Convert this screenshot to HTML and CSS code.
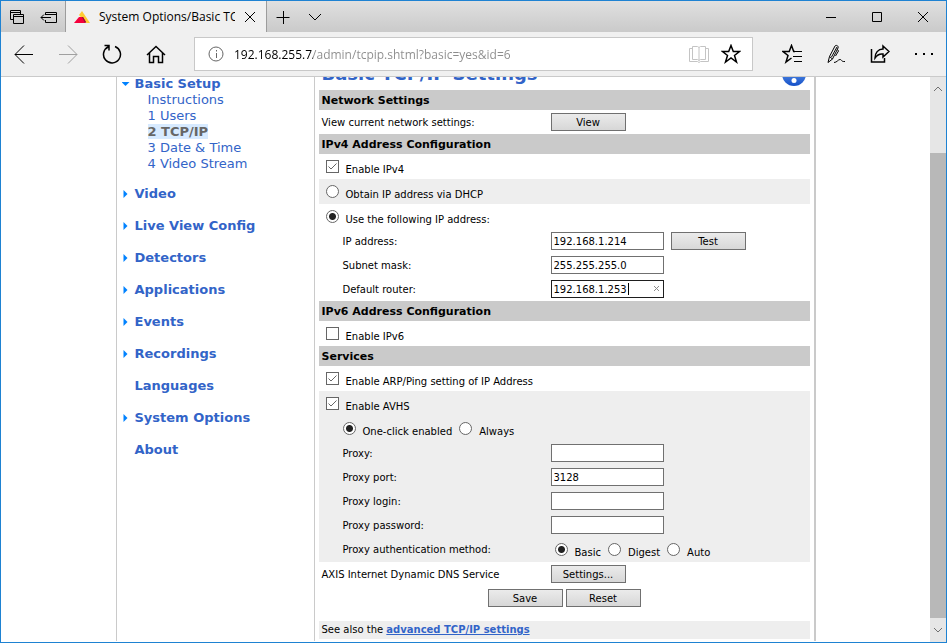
FILE: index.html
```
<!DOCTYPE html>
<html lang="en">

<head>
    <meta charset="utf-8" />
    <meta name="viewport" content="width=device-width, initial-scale=1" />
    <title>System Options/Basic TCP/IP Settings</title>
    <link rel="stylesheet" href="styles.css">
</head>

<body>
    <header class="titlebar">
        <div class="tab-tools">
            <button type="button" aria-label="Tabs set aside">
                <svg width="16" height="16" viewBox="0 0 16 16"><path d="M4 10.500H1.500v-9h10V5M1.500 3.500h10M4.500 5.500h10v9h-10zM4.500 7.500h10" /></svg>
            </button>
            <button type="button" aria-label="Set tabs aside">
                <svg width="18" height="16" viewBox="0 0 18 16"><path d="M5.500 6V3.500h11v10h-11V11M5.500 5.500h11M1 8.500h10M4 5.500l-3 3 3 3" /></svg>
            </button>
        </div>
        <div class="tab">
            <svg width="16" height="12" viewBox="0 0 16 12"><path class="fav-yellow" d="M8 0l8 12h-4L5 4z" /><path class="fav-red" d="M5 6h4l3 5-1 1H0z" /><path class="fav-dark" d="M8 6h1l3 5-1 1z" /></svg>
            <span class="tab-title">System Options/Basic TCP/IP</span>
            <button type="button" aria-label="Close tab">
                <svg width="12" height="12" viewBox="0 0 12 12"><path d="M1 1l10 10M11 1L1 11" /></svg>
            </button>
        </div>
        <button type="button" class="tab-btn" aria-label="New tab">
            <svg width="14" height="14" viewBox="0 0 14 14"><path d="M.5 7.500h13M7.500 1v13" /></svg>
        </button>
        <button type="button" class="tab-btn" aria-label="Tab previews">
            <svg width="14" height="14" viewBox="0 0 14 14"><path d="M1 4l6 6 6-6" /></svg>
        </button>
        <div class="window-btns">
            <button type="button" aria-label="Minimize"><svg width="12" height="12" viewBox="0 0 12 12"><path d="M1 6.500h10" /></svg></button>
            <button type="button" aria-label="Maximize"><svg width="12" height="12" viewBox="0 0 12 12"><path d="M1.500 1.500h9v9h-9z" /></svg></button>
            <button type="button" aria-label="Close"><svg width="12" height="12" viewBox="0 0 12 12"><path d="M1 1l10 10M11 1L1 11" /></svg></button>
        </div>
    </header>

    <nav class="toolbar">
        <button type="button" aria-label="Back"><svg width="20" height="20" viewBox="0 0 20 20"><path d="M19 10.500H1M10 1.500l-9 9 9 9" /></svg></button>
        <button type="button" class="off" aria-label="Forward"><svg width="20" height="20" viewBox="0 0 20 20"><path d="M1 10.500h18M10 1.500l9 9-9 9" /></svg></button>
        <button type="button" aria-label="Refresh"><svg width="20" height="20" viewBox="0 0 20 20"><path class="thick" d="M13 2.500a8.500 8.500 0 1 1-6.500.2M2.500 1.500h4.500v5" /></svg></button>
        <button type="button" aria-label="Home"><svg width="20" height="20" viewBox="0 0 20 20"><path class="thick" d="M1 11l9-8.500 9 8.500M3.500 9v9.500h4v-6h5v6h4V9" /></svg></button>
        <div class="address">
            <svg width="16" height="16" viewBox="0 0 16 16" class="info"><circle cx="8" cy="8" r="7" /><path d="M8.500 7v5M8.500 4v1.500" /></svg>
            <input type="text" class="url" aria-label="Address" value="192.168.255.7/admin/tcpip.shtml?basic=yes&amp;id=6">
            <button type="button" class="faded" aria-label="Reading view"><svg width="20" height="20" viewBox="0 0 20 20"><path d="M10 3.500L8.500 2.500H3.500v13h5l1.500 1 1.500-1h5v-13h-5zM10 3.500v13M3.500 4.500h-3v13h8l1.500 1 1.500-1h8v-13h-3" /></svg></button>
            <button type="button" aria-label="Add to favorites"><svg width="20" height="20" viewBox="0 0 20 20"><path class="thick" d="M10 1.500l2.300 6h6.200l-5 4 2 6.500L10 14l-5.500 4 2-6.500-5-4h6.200z" /></svg></button>
        </div>
        <button type="button" aria-label="Hub"><svg width="20" height="20" viewBox="0 0 20 20"><path class="thick" d="M13 7.500h-1.300l-2.200-6-2.300 6H1l5 4-2 6.500 5.500-4" /><path d="M12 7.500h8M11 12.500h9M12 17.500h8" /></svg></button>
        <button type="button" aria-label="Make a web note"><svg width="20" height="20" viewBox="0 0 20 20"><path d="M2 18.500l1.500-6L9 2c1-1.500 4 0 3 2L6.500 15zM3.500 12.500l3 2.500M5.500 13L11 3M11.500 5.500l1 1.500-3 5M8 18.500c3 0 4-3 6-3s1 2.500 5 2" /></svg></button>
        <button type="button" aria-label="Share"><svg width="20" height="20" viewBox="0 0 20 20"><path class="thick" d="M1.500 5v13h13v-4M13 2l6 5.500-6 5.500v-3C9 9.500 7 11 5 14c0-5 3-9 8-9z" /></svg></button>
        <button type="button" aria-label="More"><svg width="20" height="20" viewBox="0 0 20 20"><path class="dots" d="M1 9h2v2H1zM9 9h2v2H9zM17 9h2v2h-2z" /></svg></button>
    </nav>

    <div class="viewport">
        <div class="scroll-area">
            <div class="page">
                <aside class="menu">
                    <div class="group open">
                        <a href="#" class="top down">Basic Setup</a>
                        <ul>
                            <li><a href="#">Instructions</a></li>
                            <li><a href="#">1 Users</a></li>
                            <li><a href="#" class="current">2 TCP/IP</a></li>
                            <li><a href="#">3 Date &amp; Time</a></li>
                            <li><a href="#">4 Video Stream</a></li>
                        </ul>
                    </div>
                    <a href="#" class="top right">Video</a>
                    <a href="#" class="top right">Live View Config</a>
                    <a href="#" class="top right">Detectors</a>
                    <a href="#" class="top right">Applications</a>
                    <a href="#" class="top right">Events</a>
                    <a href="#" class="top right">Recordings</a>
                    <a href="#" class="top">Languages</a>
                    <a href="#" class="top right">System Options</a>
                    <a href="#" class="top">About</a>
                </aside>

                <main class="main">
                    <div class="heading">
                        <h1>Basic TCP/IP Settings</h1>
                        <a href="#" aria-label="Help"><svg width="24" height="24" viewBox="0 0 24 24"><defs><linearGradient id="ball" x1="0" y1="0" x2="0" y2="1"><stop offset="0" stop-color="#7db1f5" /><stop offset="1" stop-color="#1450c8" /></linearGradient></defs><circle class="ball" cx="12" cy="12" r="12" fill="url(#ball)" /><path class="mark" d="M8 9c0-5 8-5 8-1 0 3-4 3-4 6" /><circle class="dot" cx="12" cy="18.500" r="2.500" /></svg></a>
                    </div>

                    <form>
                        <h2>Network Settings</h2>
                        <div class="row">
                            <span class="name">View current network settings:</span>
                            <button type="button" class="btn">View</button>
                        </div>

                        <h2>IPv4 Address Configuration</h2>
                        <div class="row pick">
                            <input type="checkbox" id="ipv4" checked><label for="ipv4">Enable IPv4</label>
                        </div>
                        <div class="row pick shade">
                            <input type="radio" name="mode" id="dhcp"><label for="dhcp">Obtain IP address via DHCP</label>
                        </div>
                        <div class="row pick">
                            <input type="radio" name="mode" id="static" checked><label for="static">Use the following IP address:</label>
                        </div>
                        <div class="row sub">
                            <label class="name" for="ip">IP address:</label>
                            <input type="text" class="field" id="ip" value="192.168.1.214">
                            <button type="button" class="btn">Test</button>
                        </div>
                        <div class="row sub">
                            <label class="name" for="mask">Subnet mask:</label>
                            <input type="text" class="field" id="mask" value="255.255.255.0">
                        </div>
                        <div class="row sub">
                            <label class="name" for="router">Default router:</label>
                            <div class="clearable">
                                <input type="text" class="field active" id="router" value="192.168.1.253">
                                <span class="caret"></span>
                                <button type="button" class="clear" aria-label="Clear"><svg width="5" height="5" viewBox="0 0 5 5"><path d="M0 0l5 5M5 0L0 5" /></svg></button>
                            </div>
                        </div>

                        <h2>IPv6 Address Configuration</h2>
                        <div class="row pick">
                            <input type="checkbox" id="ipv6"><label for="ipv6">Enable IPv6</label>
                        </div>

                        <h2>Services</h2>
                        <div class="row pick">
                            <input type="checkbox" id="arp" checked><label for="arp">Enable ARP/Ping setting of IP Address</label>
                        </div>
                        <div class="shade">
                            <div class="row pick">
                                <input type="checkbox" id="avhs" checked><label for="avhs">Enable AVHS</label>
                            </div>
                            <div class="row pick sub">
                                <input type="radio" name="avhs-mode" id="oneclick" checked><label for="oneclick">One-click enabled</label>
                                <input type="radio" name="avhs-mode" id="always"><label for="always">Always</label>
                            </div>
                            <div class="row sub">
                                <label class="name" for="proxy">Proxy:</label>
                                <input type="text" class="field" id="proxy">
                            </div>
                            <div class="row sub">
                                <label class="name" for="port">Proxy port:</label>
                                <input type="text" class="field" id="port" value="3128">
                            </div>
                            <div class="row sub">
                                <label class="name" for="login">Proxy login:</label>
                                <input type="text" class="field" id="login">
                            </div>
                            <div class="row sub">
                                <label class="name" for="password">Proxy password:</label>
                                <input type="password" class="field" id="password">
                            </div>
                            <div class="row sub auth">
                                <span class="name">Proxy authentication method:</span>
                                <div class="pick">
                                    <input type="radio" name="auth" id="basic" checked><label for="basic">Basic</label>
                                    <input type="radio" name="auth" id="digest"><label for="digest">Digest</label>
                                    <input type="radio" name="auth" id="auto"><label for="auto">Auto</label>
                                </div>
                            </div>
                        </div>
                        <div class="row">
                            <span class="name">AXIS Internet Dynamic DNS Service</span>
                            <button type="button" class="btn">Settings...</button>
                        </div>
                        <div class="row actions">
                            <button type="submit" class="btn">Save</button>
                            <button type="reset" class="btn">Reset</button>
                        </div>
                    </form>
                    <p class="see-also shade">See also the <a href="#">advanced TCP/IP settings</a></p>
                </main>
            </div>
        </div>
        <div class="scrollbar">
            <svg width="16" height="16" viewBox="0 0 16 16"><path d="M4 10l4-4 4 4" /></svg>
            <div class="track"><div class="thumb"></div></div>
            <svg width="16" height="16" viewBox="0 0 16 16"><path d="M4 6l4 4 4-4" /></svg>
        </div>
    </div>
</body>

</html>
```

FILE: styles.css
```
* {
    box-sizing: border-box;
}

body {
    margin: 0;
    height: 100vh;
    display: flex;
    flex-direction: column;
    overflow: hidden;
    border: 1px solid #1e82d2;
    background-color: #fff;
    font-family: "DejaVu Sans", sans-serif;
    font-size: 10px;
    color: #000;
}

button,
input {
    font: inherit;
    color: inherit;
    margin: 0;
    padding: 0;
}

svg {
    display: block;
    flex: none;
    fill: none;
    stroke: #000;
}

/* title bar */

.titlebar {
    display: flex;
    flex: none;
    height: 31px;
    background: linear-gradient(#e0e0e0, #cacaca);
}

.titlebar button,
.toolbar button {
    display: flex;
    align-items: center;
    justify-content: center;
    flex: none;
    border: none;
    background: none;
}

.tab-tools {
    display: flex;
    width: 65px;
    border-right: 1px solid #9c9c9c;
}

.tab-tools button {
    width: 32px;
}

.tab {
    display: flex;
    align-items: center;
    width: 201px;
    padding: 0 10px 0 8px;
    gap: 9px;
    border-right: 1px solid #9c9c9c;
    background-color: #f0f0f0;
}

.fav-yellow {
    fill: #ffcc33;
    stroke: none;
}

.fav-red {
    fill: #f5003c;
    stroke: none;
}

.fav-dark {
    fill: #8c1432;
    stroke: none;
}

.tab-title {
    flex: 1;
    overflow: hidden;
    white-space: nowrap;
    font-family: "Open Sans", sans-serif;
    font-size: 12px;
}

.tab-btn {
    width: 32px;
}

.window-btns {
    display: flex;
    margin-left: auto;
}

.window-btns button {
    width: 46px;
}

/* address row */

.toolbar {
    display: flex;
    align-items: center;
    flex: none;
    height: 45px;
    padding-left: 1px;
    border-bottom: 1px solid #cacaca;
    background-color: #f0f0f0;
}

.toolbar button {
    width: 44px;
    height: 40px;
}

.toolbar .off svg {
    stroke: #a0a0a0;
}

.thick {
    stroke-width: 1.5;
}

.dots {
    fill: #000;
    stroke: none;
}

.address {
    display: flex;
    align-items: center;
    flex: 1;
    height: 34px;
    margin: 0 17px 0 16px;
    padding: 0 5px 0 13px;
    border: 1px solid #c8c8c8;
    background-color: #fff;
}

.address button {
    width: 32px;
    height: 30px;
}

.info {
    stroke: #666;
}

.toolbar .faded svg {
    stroke: #c4c4c4;
}

.url {
    flex: 1;
    min-width: 0;
    margin-left: 10px;
    border: none;
    outline: none;
    font-family: "Open Sans", sans-serif;
    font-size: 12px;
    /* host in black, the rest of the address in grey */
    background: linear-gradient(90deg, #000 79px, #8c8c8c 79px);
    -webkit-background-clip: text;
    background-clip: text;
    color: transparent;
}

/* page */

.viewport {
    display: flex;
    flex: 1;
    min-height: 0;
}

.scroll-area {
    flex: 1;
    overflow: hidden;
}

.page {
    display: flex;
    max-width: 700px;
    min-height: 100%;
    margin: -20px auto 0;
    border-left: 1px solid #cacaca;
    border-right: 2px solid #cacaca;
}

.menu {
    flex: none;
    width: 198px;
    padding: 19px 0 0 5px;
    border-right: 1px solid #cacaca;
    font-size: 13px;
    line-height: 16px;
}

.menu a {
    color: #3264c8;
    text-decoration: none;
}

.menu ul {
    margin: 0;
    padding: 0 0 0 26px;
    list-style: none;
}

.menu .top {
    display: flex;
    align-items: center;
    margin-bottom: 16px;
    font-weight: bold;
}

.menu .open .top {
    margin-bottom: 0;
}

.menu .open {
    margin-bottom: 14px;
}

.top::before {
    content: "";
    width: 8px;
    height: 8px;
    margin-right: 5px;
}

.top.right::before {
    background-color: #0082ff;
    clip-path: polygon(2px 0, 6px 4px, 2px 8px);
}

.top.down::before {
    background-color: #0082ff;
    clip-path: polygon(0 2px, 8px 2px, 4px 6px);
}

.menu .current {
    background-color: #d7eaff;
    color: #666;
    font-weight: bold;
}

.main {
    flex: 1;
    min-width: 0;
    padding: 0 4px 2px;
}

.heading {
    display: flex;
    align-items: center;
    justify-content: space-between;
    height: 33px;
    padding: 0 4px 0 3px;
}

h1 {
    margin: 0;
    font-size: 18px;
    color: #3264c8;
}

.ball,
.dot {
    stroke: none;
}

.dot {
    fill: #fff;
}

.mark {
    stroke: #fff;
    stroke-width: 3;
}

h2 {
    margin: 0;
    padding: 2px 3px 0;
    background-color: #cacaca;
    font-size: 11px;
    line-height: 18px;
}

.row {
    display: flex;
    align-items: center;
    height: 24px;
    padding: 0 3px;
}

.shade {
    background-color: #eee;
}

.name {
    flex: none;
    width: 229px;
}

.sub {
    padding-left: 24px;
}

.sub .name {
    width: 208px;
}

.pick {
    display: flex;
    align-items: baseline;
    height: 25px;
    padding-top: 6px;
    padding-left: 7px;
}

.pick.sub {
    padding-left: 24px;
}

.pick label {
    margin: 0 7px;
}

.auth {
    height: 25px;
}

.auth .pick {
    padding-left: 4px;
}

.pick input {
    flex: none;
    appearance: none;
    width: 13px;
    height: 13px;
    border: 1px solid #666;
    background-color: #fff;
}

.pick input[type="radio"] {
    border-radius: 50%;
}

.pick input[type="radio"]:checked {
    background-image: radial-gradient(circle, #222 3px, transparent 4px);
}

.pick input[type="checkbox"]:checked {
    background-image: url("data:image/svg+xml,%3Csvg xmlns='http://www.w3.org/2000/svg' viewBox='0 0 11 11'%3E%3Cpath d='M1.500 5.500l2.500 2.500 5.500-5.500' fill='none' stroke='%23666'/%3E%3C/svg%3E");
}

.field {
    width: 113px;
    height: 18px;
    padding: 0 2px;
    border: 1px solid #707070;
    background-color: #fff;
    outline: none;
}

.field.active {
    border-color: #1e1e1e;
}

.clearable {
    position: relative;
    display: flex;
}

.caret {
    position: absolute;
    top: 3px;
    left: 77px;
    width: 1px;
    height: 12px;
    background-color: #000;
}

.clear {
    position: absolute;
    top: 6px;
    right: 5px;
    border: none;
    background: none;
}

.clear svg {
    stroke: #8c8c8c;
}

.btn {
    width: 75px;
    height: 18px;
    border: 1px solid #707070;
    background: linear-gradient(#ebebeb, #d7d7d7);
}

.field + .btn {
    margin-left: 7px;
}

.actions {
    justify-content: center;
    gap: 3px;
}

.see-also {
    margin: 11px 0 0;
    padding: 0 3px;
    line-height: 18px;
}

.see-also a {
    color: #3264c8;
    font-weight: bold;
}

/* scroll bar */

.scrollbar {
    display: flex;
    flex-direction: column;
    flex: none;
    width: 16px;
    background-color: #e6e6e6;
}

.scrollbar svg {
    height: 24px;
    stroke: #707070;
}

.track {
    display: flex;
    flex: 1;
    align-items: flex-end;
}

.thumb {
    width: 100%;
    height: 90%;
    background-color: #b8b8b8;
}
```
